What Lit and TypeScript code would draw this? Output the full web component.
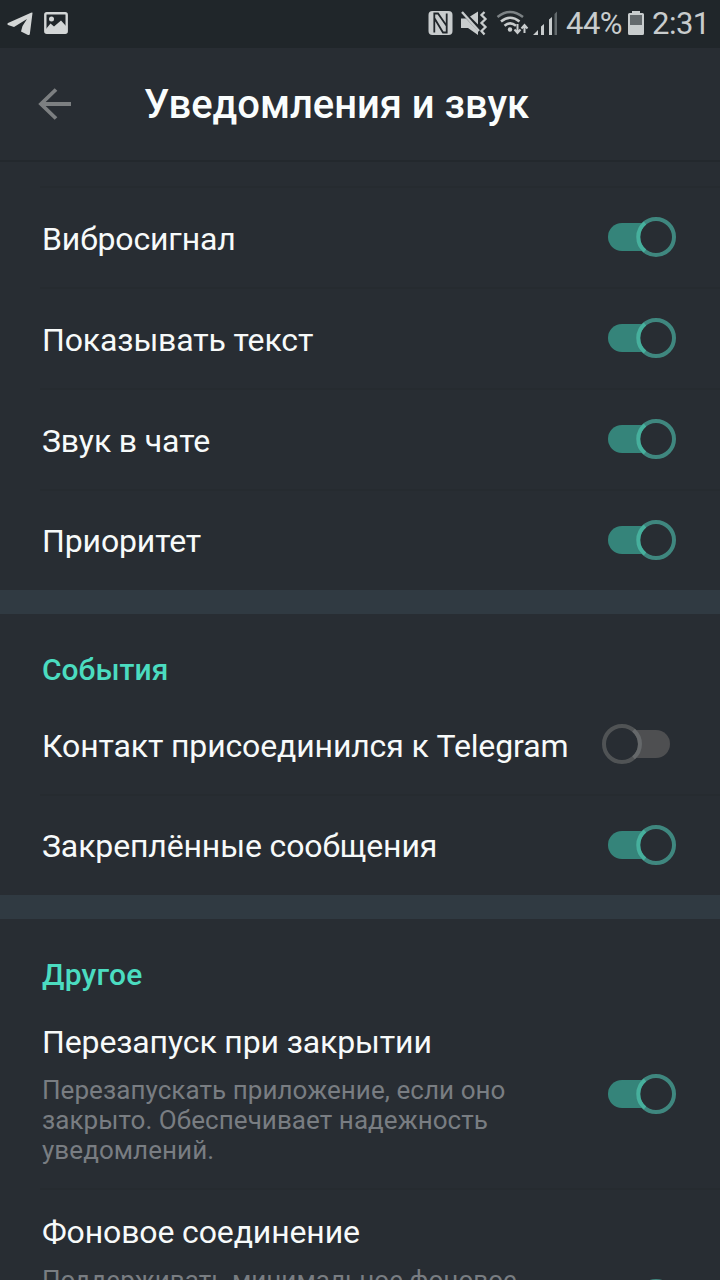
import { LitElement, html, css, svg } from "lit";
import { customElement, property } from "lit/decorators.js";

@customElement("toggle-switch")
class ToggleSwitch extends LitElement {
  @property({ type: Boolean }) on = false;
  static styles = css`
    :host { display: block; width: 74px; height: 40px; flex: none; }
    svg { display: block; }
  `;
  render() {
    return this.on
      ? html`<svg width="74" height="40" viewBox="0 0 74 40">
          <path d="M20 6H54V34H20A14 14 0 0 1 20 6Z" fill="#35847a" />
          <circle cx="54" cy="20" r="18" fill="#282d33" stroke="#3f877f" stroke-width="4" />
          <path d="M43 6A18 18 0 0 0 43 34" fill="none" stroke="#46b09d" stroke-width="4" />
        </svg>`
      : html`<svg width="74" height="40" viewBox="0 0 74 40">
          <path d="M20 6H54A14 14 0 0 1 54 34H20Z" fill="#4e4f51" />
          <circle cx="20" cy="20" r="18" fill="#282d33" stroke="#505355" stroke-width="4" />
          <path d="M31.500 6.200A18 18 0 0 1 31.500 33.800" fill="none" stroke="#65686a" stroke-width="4" />
        </svg>`;
  }
}

@customElement("setting-row")
class SettingRow extends LitElement {
  @property() label = "";
  @property({ type: Array }) lines: string[] = [];
  @property({ type: Boolean }) on = false;
  static styles = css`
    :host { display: flex; box-sizing: border-box; height: 101px; padding: 0 44px 0 42px; align-items: center; justify-content: space-between; }
    .label { font-size: 32px; line-height: 40px; color: #f7fafa; white-space: nowrap; letter-spacing: -0.13px; }
    .copy { padding-top: 4px; }
    :host(.last) .copy { padding-top: 2px; }
    :host(.tall) .copy { align-self: flex-start; padding-top: 22px; }
    :host(.cut) .copy { align-self: flex-start; padding-top: 24px; }
    .sub { font-size: 26px; line-height: 30px; color: #797d82; white-space: nowrap; padding-top: 13px; letter-spacing: 0.06px; }
  `;
  render() {
    return html`<div class="copy">
        <div class="label">${this.label}</div>
        ${this.lines.length ? html`<div class="sub">${this.lines.map((l) => html`<div>${l}</div>`)}</div>` : ""}
      </div>
      <toggle-switch ?on=${this.on}></toggle-switch>`;
  }
}

const signalBars = svg`
  <path d="M533 35L538 30V35Z M541 26.500L544 24V35H541Z M549 19.500L552 17V35H549Z" fill="#c8cccd"/>
  <path d="M554.500 14L557 11.500V35H554.500Z" fill="#636a6d"/>`;

@customElement("status-bar")
class StatusBar extends LitElement {
  static styles = css`
    :host { display: flex; height: 48px; background: #20262a; color: #c8cccd; box-sizing: border-box; }
    .left { width: 420px; }
    svg { display: block; flex: none; }
    .pct { width: 60px; padding-left: 6px; }
    .time { padding-left: 6px; }
    .txt { font-size: 31px; line-height: 48px; white-space: nowrap; letter-spacing: -0.5px; }
  `;
  render() {
    return html`
      <svg class="left" width="420" height="48" viewBox="0 0 420 48">
        <path d="M32.500 13L29.800 34.300Q29.500 35.500 28 34.900L21 31.500L22.500 26L27 19L14 27L8 25Q6.500 24 8 23L31 12.700Q32.700 12 32.500 13Z" fill="#d3d6d6"/>
        <rect x="45.300" y="13.300" width="21.400" height="19.400" rx="1.500" fill="none" stroke="#d3d6d6" stroke-width="2.400"/>
        <circle cx="51.500" cy="19" r="2.500" fill="#d3d6d6"/>
        <path d="M46 29L50.500 23.500L54 26.500L61 20.500L66 26V32H46Z" fill="#d3d6d6"/>
      </svg>
      <svg width="140" height="48" viewBox="420 0 140 48">
        <rect x="428.500" y="11" width="24" height="24" rx="4" fill="#c8cccd"/>
        <path d="M434.300 32.500V13.500H438L446.700 26V13.500M446.700 13.500V32.500H443L434.300 18" fill="none" stroke="#20262a" stroke-width="1.800"/>
        <path d="M461 18.500H466L478 31V35L468 28H461Z M470 16.500L478 11.500V24.500Z" fill="#c8cccd"/>
        <path d="M462 12L479 31" stroke="#c8cccd" stroke-width="2.400"/>
        <path d="M484.500 12L481.500 15L485.500 19L481.500 23L485.500 27L481.500 31L484.500 34.500" fill="none" stroke="#c8cccd" stroke-width="2.300"/>
        <path d="M497.500 17Q510 7 523 17" fill="none" stroke="#7c8285" stroke-width="2.500"/>
        <path d="M501 21.500Q510 14 519.500 21.500M504.500 25.800Q510 21 516 25.800" fill="none" stroke="#c8cccd" stroke-width="2.500"/>
        <circle cx="510" cy="29.500" r="2.200" fill="#c8cccd"/>
        <path d="M517.500 24V33M514.500 29.500L517.500 33L520.500 29.500M524.500 33V25M521.500 28.500L524.500 25L527.500 28.500" fill="none" stroke="#c8cccd" stroke-width="2"/>
        ${signalBars}
      </svg>
      <div class="txt pct">44%</div>
      <svg width="20" height="48" viewBox="626 0 20 48">
        <path d="M632 13V11H640V13H642.500Q644 13 644 14.500V33.500Q644 35 642.500 35H629.500Q628 35 628 33.500V14.500Q628 13 629.500 13Z" fill="#c8cccd"/>
        <rect x="630" y="15" width="12" height="10" fill="#63696c"/>
      </svg>
      <div class="txt time">2:31</div>`;
  }
}

@customElement("app-root")
class AppRoot extends LitElement {
  static styles = css`
    :host { display: block; height: 1280px; width: 720px; overflow: hidden; background: #282d33; font-family: Roboto, sans-serif; }
    header { box-sizing: border-box; height: 114px; display: flex; align-items: center; border-bottom: 2px solid #23282d; padding-left: 38px; }
    header svg { display: block; width: 106px; flex: none; }
    h1 { margin: 0; padding-top: 1px; font-size: 40px; line-height: 48px; font-weight: 500; color: #fafdfd; white-space: nowrap; letter-spacing: -0.04px; }
    .gap { height: 24px; }
    .line { height: 2px; margin: 0 0 -2px 40px; background: #262b30; }
    .band { height: 24px; background: #303a42; }
    h2 { box-sizing: border-box; height: 79px; margin: 0; padding: 36px 0 0 42px; font-size: 30px; line-height: 40px; font-weight: 500; color: #4bdcc0; }
    h2.other { height: 81px; letter-spacing: 0.2px; }
    .tall { height: 188px; }
    .cut { height: 222px; }
  `;
  render() {
    return html`
      <status-bar></status-bar>
      <header>
        <svg width="106" height="40" viewBox="38 84 106 40"><path d="M71 104H41M56 89.500L41 104L56 118.500" fill="none" stroke="#7c7f81" stroke-width="3.800"/></svg>
        <h1>Уведомления и звук</h1>
      </header>
      <div class="gap"></div>
      ${["Вибросигнал", "Показывать текст", "Звук в чате", "Приоритет"].map(
        (t, i) => html`<div class="line"></div><setting-row class=${i === 3 ? "last" : ""} .label=${t} on></setting-row>`
      )}
      <div class="band"></div>
      <h2>События</h2>
      <setting-row label="Контакт присоединился к Telegram"></setting-row>
      <div class="line"></div>
      <setting-row class="last" label="Закреплённые сообщения" on></setting-row>
      <div class="band"></div>
      <h2 class="other">Другое</h2>
      <setting-row class="tall" label="Перезапуск при закрытии" on
        .lines=${["Перезапускать приложение, если оно", "закрыто. Обеспечивает надежность", "уведомлений."]}></setting-row>
      <div class="line"></div>
      <setting-row class="cut" label="Фоновое соединение" on
        .lines=${["Поддерживать минимальное фоновое"]}></setting-row>`;
  }
}
